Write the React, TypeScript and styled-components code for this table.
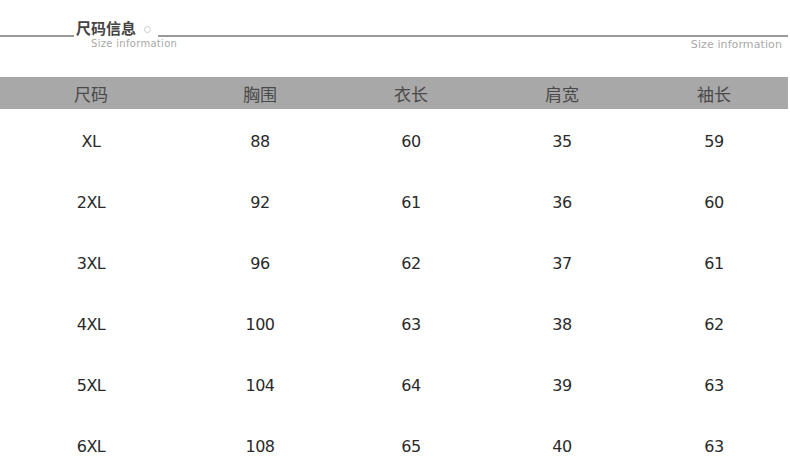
import React from "react";
import styled, { createGlobalStyle } from "styled-components";

const GlobalStyle = createGlobalStyle`
  html, body {
    margin: 0;
    padding: 0;
    background: #fff;
  }
  body {
    font-family: "DejaVu Sans", "Noto Sans CJK SC", sans-serif;
  }
`;

const Page = styled.div`
  width: 790px;
  height: 475px;
  overflow: hidden;
  background: #fff;
`;

const TitleBar = styled.div`
  display: grid;
  grid-template-columns: 74px 84px 1fr;
  align-items: start;
  width: 788px;
  padding-top: 19px;
  height: 58px;
  box-sizing: border-box;
`;

const Rule = styled.div`
  height: 2px;
  background: #9a9a9a;
  margin-top: 16px;
`;

const TitleBlock = styled.div`
  display: flex;
  flex-direction: column;
  padding-left: 2px;
  white-space: nowrap;
`;

const TitleMain = styled.div`
  display: flex;
  align-items: center;
  gap: 8px;
  font-family: "Noto Sans CJK SC", sans-serif;
  font-size: 15px;
  font-weight: 700;
  line-height: 17px;
  color: #444;
`;

const Dot = styled.span`
  width: 5px;
  height: 5px;
  border: 1px solid #ccc;
  border-radius: 50%;
  margin-top: 3px;
`;

const Subtitle = styled.div<{ $right?: boolean }>`
  font-family: "DejaVu Sans", sans-serif;
  font-size: ${(p) => (p.$right ? "11px" : "10px")};
  line-height: 12px;
  color: #a8a8a8;
  letter-spacing: ${(p) => (p.$right ? "0.1px" : "0.3px")};
  text-align: ${(p) => (p.$right ? "right" : "left")};
  padding-left: ${(p) => (p.$right ? "0" : "15px")};
  margin-top: 2px;
  white-space: nowrap;
`;

const RightSide = styled.div`
  display: flex;
  flex-direction: column;
  padding-right: 6px;
`;

const Table = styled.div`
  width: 788px;
  margin-top: 19px;
`;

const Row = styled.div<{ $head?: boolean }>`
  display: grid;
  grid-template-columns: 182px 156px 146px 156px 148px;
  align-items: center;
  height: ${(p) => (p.$head ? "32px" : "61px")};
  padding-top: ${(p) => (p.$head ? "0" : "3px")};
  box-sizing: border-box;
  background: ${(p) => (p.$head ? "#a8a8a8" : "transparent")};
`;

const Cell = styled.div<{ $head?: boolean }>`
  text-align: center;
  font-family: ${(p) =>
    p.$head ? `"Noto Sans CJK SC", sans-serif` : `"DejaVu Sans", sans-serif`};
  font-size: ${(p) => (p.$head ? "17px" : "16px")};
  color: ${(p) => (p.$head ? "#4a4a4a" : "#2a2a2a")};
  letter-spacing: ${(p) => (p.$head ? "0" : "-0.5px")};
`;

const headers = ["尺码", "胸围", "衣长", "肩宽", "袖长"];

const rows = [
  ["XL", "88", "60", "35", "59"],
  ["2XL", "92", "61", "36", "60"],
  ["3XL", "96", "62", "37", "61"],
  ["4XL", "100", "63", "38", "62"],
  ["5XL", "104", "64", "39", "63"],
  ["6XL", "108", "65", "40", "63"],
];

export default function App() {
  return (
    <Page>
      <GlobalStyle />
      <TitleBar>
        <Rule />
        <TitleBlock>
          <TitleMain>
            尺码信息
            <Dot />
          </TitleMain>
          <Subtitle>Size information</Subtitle>
        </TitleBlock>
        <RightSide>
          <Rule style={{ marginRight: -6 }} />
          <Subtitle $right>Size information</Subtitle>
        </RightSide>
      </TitleBar>
      <Table>
        <Row $head>
          {headers.map((h) => (
            <Cell $head key={h}>
              {h}
            </Cell>
          ))}
        </Row>
        {rows.map((r) => (
          <Row key={r[0]}>
            {r.map((c, i) => (
              <Cell key={i}>{c}</Cell>
            ))}
          </Row>
        ))}
      </Table>
    </Page>
  );
}
